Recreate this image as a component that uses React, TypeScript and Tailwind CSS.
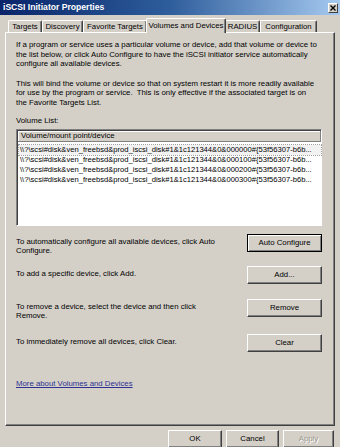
import clsx from 'clsx'

const tabs = [
  { label: 'Targets', w: 'w-[34px]' },
  { label: 'Discovery', w: 'w-[41px]' },
  { label: 'Favorite Targets', w: 'w-[64px]' },
  { label: 'Volumes and Devices', w: 'w-[80px]', active: true },
  { label: 'RADIUS', w: 'w-[35px]' },
  { label: 'Configuration', w: 'w-[57px]' },
]

const volumes = ['000000', '000100', '000200', '000300']

function Btn({
  children,
  isDefault,
  disabled,
  className,
}: {
  children: React.ReactNode
  isDefault?: boolean
  disabled?: boolean
  className?: string
}) {
  return (
    <div
      className={clsx(
        'flex items-center justify-center bg-[#d4d0c8] text-[7.8px] leading-none',
        isDefault
          ? 'border border-black shadow-[inset_1px_1px_#fff,inset_-1px_-1px_#808080]'
          : 'border border-t-white border-l-white border-r-[#404040] border-b-[#404040] shadow-[inset_-1px_-1px_#808080]',
        disabled ? 'text-[#9a978f] [text-shadow:1px_1px_#fff]' : 'text-black',
        className,
      )}
    >
      {children}
    </div>
  )
}

// one instruction row: text on the left, push button on the right
function ActionRow({ lines, button, isDefault, className }: { lines: string[]; button: string; isDefault?: boolean; className?: string }) {
  return (
    <div className={clsx('flex justify-between', className)}>
      <p className="pt-[3px] leading-[9px] whitespace-nowrap">
        {lines.map((l) => (
          <span key={l} className="block">
            {l}
          </span>
        ))}
      </p>
      <Btn isDefault={isDefault} className="w-[75px] h-[18px]">
        {button}
      </Btn>
    </div>
  )
}

export default function App() {
  return (
    <div className="w-[340px] h-[447px] overflow-hidden bg-[#d4d0c8] font-['Liberation_Sans',Arial,sans-serif] text-[7.8px] text-black select-none">
      {/* Title bar */}
      <div className="h-[15px] flex items-center justify-between pl-[3px] pr-[2px] bg-linear-to-r from-[#0a246a] via-[#2f5e9c] to-[#a6caf0]">
        <span className="text-white font-bold text-[8.6px] leading-none">iSCSI Initiator Properties</span>
        <div className="w-[10px] h-[10px] flex items-center justify-center bg-[#d4d0c8] border border-t-white border-l-white border-r-[#404040] border-b-[#404040]">
          <svg width="6" height="6" viewBox="0 0 6 6">
            <path d="M0.5 0.5 L5.5 5.5 M5.5 0.5 L0.5 5.5" stroke="black" strokeWidth="1.4" />
          </svg>
        </div>
      </div>

      {/* Tabs */}
      <div className="mt-[3px] pl-[8px] flex items-end h-[14px]">
        {tabs.map((t) => (
          <div
            key={t.label}
            className={clsx(
              'flex items-center justify-center whitespace-nowrap border-t border-l border-r border-t-white border-l-white border-r-[#404040] rounded-t-[2px] shadow-[inset_-1px_0_#808080] leading-none',
              t.w,
              t.active ? 'h-[15px] -mx-[1px] relative z-10 bg-[#d4d0c8] -mb-[1px] pb-[1px]' : 'h-[12px]',
            )}
          >
            {t.label}
          </div>
        ))}
      </div>

      {/* Tab page */}
      <div className="ml-[5px] w-[330px] h-[394px] border border-t-white border-l-white border-r-[#404040] border-b-[#404040] shadow-[inset_-1px_-1px_#808080] pl-[10px] pr-[12px] pt-[7px]">
        <p className="leading-[9.5px] whitespace-nowrap">
          If a program or service uses a particular volume or device, add that volume or device to
          <br />
          the list below, or click Auto Configure to have the iSCSI initiator service automatically
          <br />
          configure all available devices.
        </p>
        <p className="mt-[10px] leading-[9.5px] whitespace-nowrap">
          This will bind the volume or device so that on system restart it is more readily available
          <br />
          for use by the program or service.&nbsp; This is only effective if the associated target is on
          <br />
          the Favorite Targets List.
        </p>
        <p className="mt-[9px] leading-[10px]">Volume List:</p>

        {/* list view */}
        <div className="mt-[3px] h-[97px] bg-white border border-t-[#808080] border-l-[#808080] border-b-white border-r-white shadow-[inset_1px_1px_#404040]">
          <div className="ml-[1px] mt-[1px] h-[11px] flex items-center pl-[3px] bg-[#d4d0c8] border-b border-r border-b-[#808080] border-r-[#808080] shadow-[inset_1px_1px_#fff] leading-none">
            Volume/mount point/device
          </div>
          <div className="pl-[2px] pt-[3px]">
            {volumes.map((v, i) => (
              <div
                key={v}
                className={clsx(
                  'h-[10px] flex items-center pl-[1px] whitespace-nowrap leading-none w-[302px] text-[7.6px]',
                  i === 0 && 'outline-1 outline-dotted outline-[#a0a0a0] bg-[#f2f2f2]',
                )}
              >
                {'\\\\?\\scsi#disk&ven_freebsd&prod_iscsi_disk#1&1c121344&0&' + v + '#{53f56307-b6b...'}
              </div>
            ))}
          </div>
        </div>

        <ActionRow
          className="mt-[8px]"
          lines={['To automatically configure all available devices, click Auto', 'Configure.']}
          button="Auto Configure"
          isDefault
        />
        <ActionRow className="mt-[11px]" lines={['To add a specific device, click Add.']} button="Add..." />
        <ActionRow
          className="mt-[15px]"
          lines={['To remove a device, select the device and then click', 'Remove.']}
          button="Remove"
        />
        <ActionRow className="mt-[14px]" lines={['To immediately remove all devices, click Clear.']} button="Clear" />

        <p className="mt-[27px] leading-[10px] text-[#2e3192] underline">More about Volumes and Devices</p>
      </div>

      {/* Dialog buttons */}
      <div className="mt-[4px] flex justify-end gap-[4px] pr-[6px]">
        <Btn className="w-[54px] h-[18px]">OK</Btn>
        <Btn className="w-[53px] h-[18px]">Cancel</Btn>
        <Btn disabled className="w-[51px] h-[18px]">
          Apply
        </Btn>
      </div>
    </div>
  )
}
